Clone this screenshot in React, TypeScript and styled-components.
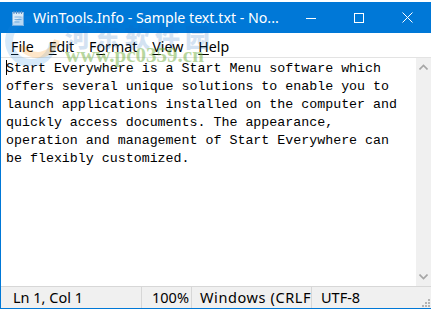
import React from "react";
import styled, { createGlobalStyle } from "styled-components";

const Global = createGlobalStyle`
  html, body { margin: 0; padding: 0; background: #ffffff; }
  body { font-family: "Open Sans", "Noto Sans", sans-serif; }
`;

const Window = styled.div`
  margin-top: 2px;
  height: 306px;
  width: 430px;
  border-left: 1px solid #0078d7;
  border-bottom: 1px solid #0078d7;
  display: flex;
  flex-direction: column;
  position: relative;
  overflow: hidden;
  background: #fff;
`;

const TitleBar = styled.div`
  height: 31px;
  flex: none;
  background: #0078d7;
  display: flex;
  align-items: center;
  color: #fff;
`;

const AppIcon = styled.div`
  width: 32px;
  display: flex;
  justify-content: center;
  padding-left: 2px;
  box-sizing: border-box;
`;

const Title = styled.div`
  flex: 1;
  font-family: "Noto Sans", "Open Sans", sans-serif;
  font-size: 14.2px;
  white-space: nowrap;
  overflow: hidden;
`;

const CaptionButton = styled.div`
  width: 48px;
  height: 31px;
  flex: none;
  display: flex;
  align-items: center;
  justify-content: center;
`;

const MenuBar = styled.div`
  height: 24px;
  box-sizing: border-box;
  padding: 3px 0 0 2px;
  flex: none;
  display: flex;
  align-items: center;
  font-family: "Noto Sans", "Open Sans", sans-serif;
  font-size: 14.2px;
  color: #000;
`;

const MenuItem = styled.div`
  padding: 0 7px 0 8px;
  line-height: 21px;
`;

const Key = styled.span`
  text-decoration: underline;
  text-underline-offset: 2px;
  text-decoration-thickness: 1px;
`;

const EditorRow = styled.div`
  flex: 1;
  display: flex;
  border-top: 1px solid #e3e3e3;
  min-height: 0;
`;

const Editor = styled.div`
  flex: 1;
  padding: 2px 0 0 5px;
  font-family: "Liberation Mono", "DejaVu Sans Mono", monospace;
  font-size: 13.3px;
  line-height: 18px;
  color: #000;
  white-space: pre;
  overflow: hidden;
`;

const Caret = styled.span`
  display: inline-block;
  width: 1px;
  height: 15px;
  background: #000;
  margin-right: -1px;
  vertical-align: -3px;
`;

const VScroll = styled.div`
  width: 15px;
  flex: none;
  background: #f0f0f0;
  display: flex;
  flex-direction: column;
  justify-content: space-between;
  align-items: center;
  padding: 6px 0 6px;
`;

const StatusBar = styled.div`
  height: 21px;
  flex: none;
  background: #f0f0f0;
  border-top: 1px solid #d7d7d7;
  display: flex;
  align-items: stretch;
  font-family: "Noto Sans", "Open Sans", sans-serif;
  font-size: 14.5px;
  color: #000;
  position: relative;
`;

const Pane = styled.div<{ $w?: number; $pl: number; $sep?: boolean; $ls?: number }>`
  width: ${(p) => (p.$w ? `${p.$w}px` : "auto")};
  flex: ${(p) => (p.$w ? "none" : "1")};
  padding-left: ${(p) => p.$pl}px;
  box-sizing: border-box;
  border-left: ${(p) => (p.$sep ? "1px solid #d7d7d7" : "none")};
  letter-spacing: ${(p) => p.$ls ?? 0}px;
  white-space: nowrap;
  overflow: hidden;
  line-height: 21px;
`;

const Grip = styled.svg`
  position: absolute;
  right: 1px;
  bottom: 1px;
`;

const Watermark = styled.div`
  position: absolute;
  left: 0;
  top: 14px;
  width: 220px;
  height: 50px;
  pointer-events: none;
  opacity: 0.6;
`;

const WmLogo = styled.svg`
  position: absolute;
  left: 0;
  top: 0;
`;

const WmCn = styled.div`
  position: absolute;
  left: 64px;
  top: 6px;
  font-family: "Noto Sans CJK SC", sans-serif;
  font-weight: 900;
  font-size: 25px;
  line-height: 28px;
  color: #1565c0;
  opacity: 0.3;
  letter-spacing: 5px;
  white-space: nowrap;
`;

const WmUrl = styled.div`
  position: absolute;
  left: 64px;
  top: 28px;
  font-family: "Liberation Serif", serif;
  font-weight: bold;
  font-size: 21px;
  line-height: 22px;
  color: #6fae3a;
  opacity: 0.8;
  white-space: nowrap;
`;

const lines = [
  "tart Everywhere is a Start Menu software which",
  "offers several unique solutions to enable you to",
  "launch applications installed on the computer and",
  "quickly access documents. The appearance,",
  "operation and management of Start Everywhere can",
  "be flexibly customized.",
];

export default function App() {
  return (
    <>
      <Global />
      <Window>
        <TitleBar>
          <AppIcon>
            <svg width="14" height="16" viewBox="0 0 14 16">
              <rect x="1.5" y="2.5" width="11" height="13" fill="#dbeaf7" stroke="#7fb2e0" />
              <path d="M3 1v3M5.5 1v3M8 1v3M10.5 1v3" stroke="#5c8fc4" strokeWidth="1" />
              <path d="M3.5 7h7M3.5 9.5h7M3.5 12h5" stroke="#7fb2e0" strokeWidth="1" />
            </svg>
          </AppIcon>
          <Title>WinTools.Info - Sample text.txt - No...</Title>
          <CaptionButton>
            <svg width="10" height="10" viewBox="0 0 10 10">
              <path d="M0 5.5h10" stroke="#fff" strokeWidth="1" />
            </svg>
          </CaptionButton>
          <CaptionButton>
            <svg width="10" height="10" viewBox="0 0 10 10">
              <rect x="0.5" y="0.5" width="9" height="9" fill="none" stroke="#fff" strokeWidth="1" />
            </svg>
          </CaptionButton>
          <CaptionButton>
            <svg width="11" height="11" viewBox="0 0 11 11">
              <path d="M0.5 0.5l10 10M10.5 0.5l-10 10" stroke="#fff" strokeWidth="1" />
            </svg>
          </CaptionButton>
        </TitleBar>
        <MenuBar>
          <MenuItem><Key>F</Key>ile</MenuItem>
          <MenuItem><Key>E</Key>dit</MenuItem>
          <MenuItem>F<Key>o</Key>rmat</MenuItem>
          <MenuItem><Key>V</Key>iew</MenuItem>
          <MenuItem><Key>H</Key>elp</MenuItem>
        </MenuBar>
        <EditorRow>
          <Editor>
            <Caret />S{lines[0]}
            {"\n"}
            {lines.slice(1).join("\n")}
          </Editor>
          <VScroll>
            <svg width="9" height="6" viewBox="0 0 9 6">
              <path d="M0.5 5.5L4.5 1.5L8.5 5.5" fill="none" stroke="#a6a6a6" strokeWidth="1.6" />
            </svg>
            <svg width="9" height="6" viewBox="0 0 9 6">
              <path d="M0.5 0.5L4.5 4.5L8.5 0.5" fill="none" stroke="#a6a6a6" strokeWidth="1.6" />
            </svg>
          </VScroll>
        </EditorRow>
        <StatusBar>
          <Pane $w={140} $pl={12}>Ln 1, Col 1</Pane>
          <Pane $w={50} $pl={10} $sep>100%</Pane>
          <Pane $w={120} $pl={8} $sep $ls={0.6}>Windows (CRLF)</Pane>
          <Pane $pl={9} $sep>UTF-8</Pane>
          <Grip width="9" height="9" viewBox="0 0 9 9">
            <g fill="#b4b4b4">
              <rect x="7" y="1" width="2" height="2" />
              <rect x="4" y="4" width="2" height="2" />
              <rect x="7" y="4" width="2" height="2" />
              <rect x="1" y="7" width="2" height="2" />
              <rect x="4" y="7" width="2" height="2" />
              <rect x="7" y="7" width="2" height="2" />
            </g>
          </Grip>
        </StatusBar>
        <Watermark>
          <WmLogo width="62" height="50" viewBox="0 0 62 50">
            <path d="M30 3a22 22 0 1 0 22 24" fill="none" stroke="#1e88e5" strokeWidth="8" opacity="0.3" />
            <path d="M20 30a20 20 0 0 0 36-6" fill="none" stroke="#fb8c00" strokeWidth="6" opacity="0.35" />
          </WmLogo>
          <WmCn>河东软件园</WmCn>
          <WmUrl>www.pc0359.cn</WmUrl>
        </Watermark>
      </Window>
    </>
  );
}
